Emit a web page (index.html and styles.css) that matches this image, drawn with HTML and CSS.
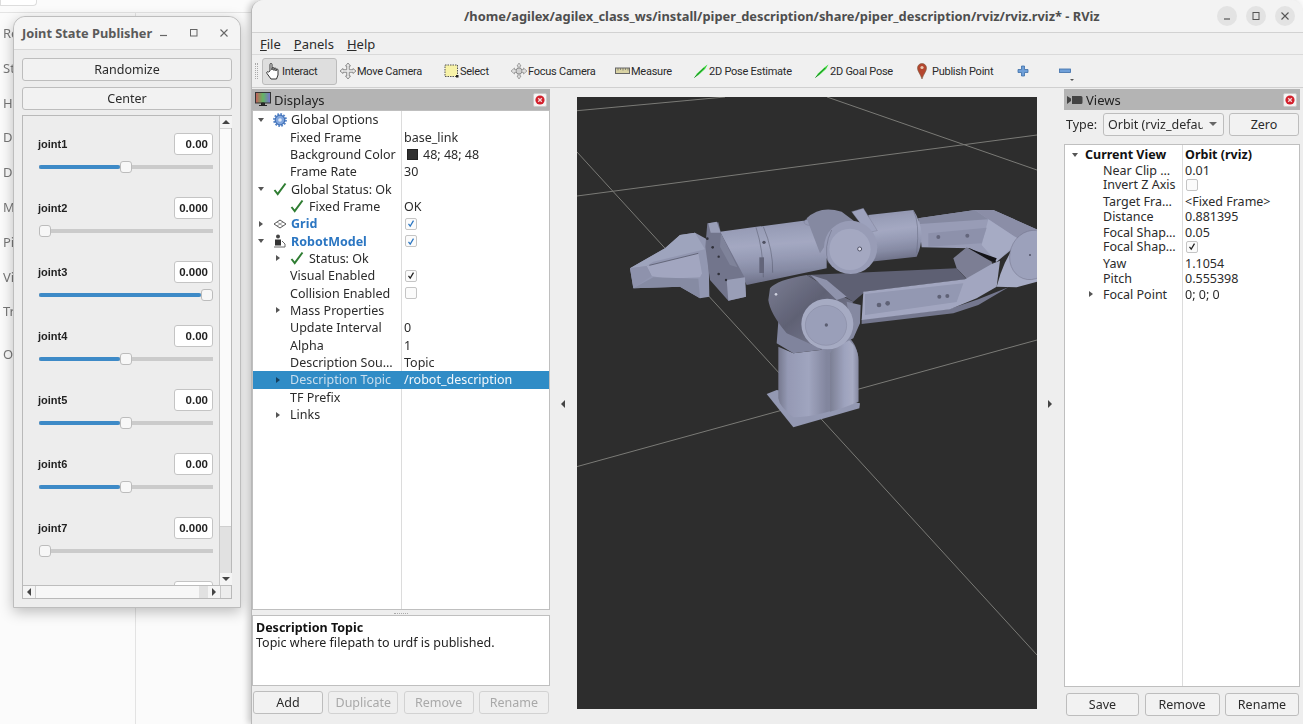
FILE: index.html
```html
<!DOCTYPE html>
<html lang="en">
<head>
<meta charset="utf-8">
<title>RViz</title>
<link rel="stylesheet" href="styles.css">
</head>
<body>
<svg class="defs" aria-hidden="true">
  <defs>
    <linearGradient id="cylH" x1="0" y1="0" x2="1" y2="0">
      <stop offset="0" stop-color="#7f8299"/><stop offset=".12" stop-color="#a0a5c2"/><stop offset=".38" stop-color="#acb1cd"/><stop offset=".6" stop-color="#8c90aa"/><stop offset="1" stop-color="#8e92ab"/>
    </linearGradient>
    <linearGradient id="cylH2" x1="0" y1="0" x2="1" y2="0">
      <stop offset="0" stop-color="#85899f"/><stop offset=".5" stop-color="#a9aecb"/><stop offset=".8" stop-color="#b4b9d3"/><stop offset="1" stop-color="#9094ae"/>
    </linearGradient>
    <linearGradient id="cylV" x1="0" y1="0" x2=".12" y2="1">
      <stop offset="0" stop-color="#969bb7"/><stop offset=".18" stop-color="#a4a9c5"/><stop offset=".42" stop-color="#b0b5d0"/><stop offset=".62" stop-color="#a2a7c3"/><stop offset=".82" stop-color="#9095b0"/><stop offset="1" stop-color="#787b94"/>
    </linearGradient>
    <linearGradient id="cylD" x1="0" y1="0" x2="1" y2="1">
      <stop offset="0" stop-color="#85889f"/><stop offset=".45" stop-color="#66687d"/><stop offset="1" stop-color="#8b8ea6"/>
    </linearGradient>
    <linearGradient id="screen" x1="0" y1="0" x2="1" y2="0">
      <stop offset="0" stop-color="#c85a5a"/><stop offset=".5" stop-color="#63b563"/><stop offset="1" stop-color="#7b6fd0"/>
    </linearGradient>
    <symbol id="i-close" viewBox="0 0 14 14">
      <rect x=".5" y=".5" width="13" height="13" rx="1.5" fill="#f5f5f5" stroke="#ccc"/>
      <circle cx="7" cy="7" r="4.6" fill="#d3202c"/>
      <path d="M5.2 5.2l3.6 3.6M8.8 5.2l-3.6 3.6" stroke="#f6dada" stroke-width="1.3"/>
    </symbol>
    <symbol id="i-check" viewBox="0 0 14 14">
      <path d="M1.5 8l3.2 4L12.5 1.5" fill="none" stroke="#2f7d32" stroke-width="2"/>
    </symbol>
    <symbol id="i-tick" viewBox="0 0 14 14">
      <path d="M3.5 7.5l2.4 3.2L10.5 3" fill="none" stroke="currentColor" stroke-width="1.7"/>
    </symbol>
    <symbol id="i-arrow" viewBox="0 0 14 14">
      <path d="M0 14L3 9.5 9.5 3.5 13.5.5 11 5 4.5 11Z" fill="#37d637"/>
      <path d="M.5 13.5L10 4" stroke="#1b7a2a" stroke-width=".8"/>
    </symbol>
  </defs>
</svg>

<div class="desk">
  <div class="desk-top"><span class="desk-tab"></span></div>
  <div class="desk-body">
    <div class="desk-side">
      <span>Re</span><span>St</span><span>He</span><span>De</span><span>De</span><span>M</span><span>Pi</span><span>Vi</span><span>Tr</span><span class="desk-last">O</span>
    </div>
  </div>

  <section class="jsp">
    <header class="jsp-title">
      <span class="jsp-name">Joint State Publisher</span>
      <span class="jsp-controls">
        <svg width="10" height="10" viewBox="0 0 10 10"><path d="M1 7.5h7" stroke="#666" stroke-width="1.2"/></svg>
        <svg width="10" height="10" viewBox="0 0 10 10"><rect x="1.5" y="1.5" width="6.5" height="6.5" fill="none" stroke="#666"/></svg>
        <svg width="10" height="10" viewBox="0 0 10 10"><path d="M1.5 1.5l7 7M8.5 1.5l-7 7" stroke="#666" stroke-width="1.1"/></svg>
      </span>
    </header>
    <div class="jsp-body">
      <button class="btn jsp-btn">Randomize</button>
      <button class="btn jsp-btn">Center</button>
      <div class="jsp-scroll">
        <div class="jsp-pane">
          <div class="jsp-list">
            <div class="joint"><div class="joint-head"><span>joint1</span><span class="joint-val">0.00</span></div><div class="slider"><span class="slider-fill" style="width:46.500%"></span><span class="slider-knob"></span></div></div>
            <div class="joint"><div class="joint-head"><span>joint2</span><span class="joint-val">0.000</span></div><div class="slider"><span class="slider-fill" style="width:0%"></span><span class="slider-knob"></span></div></div>
            <div class="joint"><div class="joint-head"><span>joint3</span><span class="joint-val">0.000</span></div><div class="slider"><span class="slider-fill" style="width:93%"></span><span class="slider-knob"></span></div></div>
            <div class="joint"><div class="joint-head"><span>joint4</span><span class="joint-val">0.00</span></div><div class="slider"><span class="slider-fill" style="width:46.500%"></span><span class="slider-knob"></span></div></div>
            <div class="joint"><div class="joint-head"><span>joint5</span><span class="joint-val">0.00</span></div><div class="slider"><span class="slider-fill" style="width:46.500%"></span><span class="slider-knob"></span></div></div>
            <div class="joint"><div class="joint-head"><span>joint6</span><span class="joint-val">0.00</span></div><div class="slider"><span class="slider-fill" style="width:46.500%"></span><span class="slider-knob"></span></div></div>
            <div class="joint"><div class="joint-head"><span>joint7</span><span class="joint-val">0.000</span></div><div class="slider"><span class="slider-fill" style="width:0%"></span><span class="slider-knob"></span></div></div>
            <div class="joint"><div class="joint-head"><span></span><span class="joint-val"></span></div></div>
          </div>
          <div class="vbar">
            <span class="sb-btn"><i class="tri tri-up"></i></span>
            <span class="vbar-thumb"></span>
            <span class="vbar-trough"></span>
            <span class="sb-btn"><i class="tri tri-down"></i></span>
          </div>
        </div>
        <div class="hbar">
          <span class="sb-btn"><i class="tri tri-left"></i></span>
          <span class="hbar-thumb"></span>
          <span class="hbar-trough"></span>
          <span class="sb-btn"><i class="tri tri-right"></i></span>
          <span class="hbar-corner"></span>
        </div>
      </div>
    </div>
  </section>

  <section class="rviz">
    <header class="rviz-title">
      <span class="rviz-name">/home/agilex/agilex_class_ws/install/piper_description/share/piper_description/rviz/rviz.rviz* - RViz</span>
      <span class="rviz-controls">
        <span class="wbtn"><svg width="10" height="10" viewBox="0 0 10 10"><path d="M2 8h6" stroke="#555" stroke-width="1.2"/></svg></span>
        <span class="wbtn"><svg width="10" height="10" viewBox="0 0 10 10"><rect x="2" y="1.5" width="6" height="7" fill="none" stroke="#555"/></svg></span>
        <span class="wbtn"><svg width="10" height="10" viewBox="0 0 10 10"><path d="M1.5 1.5l7 7M8.5 1.5l-7 7" stroke="#555" stroke-width="1.1"/></svg></span>
      </span>
    </header>
    <nav class="menu">
      <span><u>F</u>ile</span><span><u>P</u>anels</span><span><u>H</u>elp</span>
    </nav>
    <div class="toolbar">
      <span class="grip"></span>
      <span class="tool tool-on">
        <svg width="15" height="18" viewBox="0 0 15 18"><path d="M4 9V2.500a1 1 0 0 1 2 0V8V6.500a1 1 0 0 1 2 0V8.500V7a1 1 0 0 1 2 0v2V8a1 1 0 0 1 2 0v5l-1.500 4H5L1 11.500a1 1 0 0 1 1.500-1.500z" fill="#fff" stroke="#333"/></svg>
        Interact</span>
      <span class="tool">
        <svg width="16" height="16" viewBox="0 0 16 16"><path d="M8 0l2.500 3H9.300v3.700H13V5.500L16 8l-3 2.500V9.300H9.300V13h1.200L8 16l-2.500-3h1.200V9.300H3v1.200L0 8l3-2.500v1.200h3.700V3H5.500z" fill="#e8e8e8" stroke="#777" stroke-width=".8"/></svg>
        Move Camera</span>
      <span class="tool">
        <svg width="15" height="14" viewBox="0 0 15 14"><rect x="1" y="1" width="12.500" height="11.500" fill="#f7f2a8" stroke="#555" stroke-dasharray="1.500 1"/><rect x="12" y="11" width="2.500" height="2.500" fill="#222"/></svg>
        Select</span>
      <span class="tool">
        <svg width="16" height="16" viewBox="0 0 16 16"><path d="M8 0l2 3H9v3.500h3.500V5L16 8l-3.500 3V9.500H9V13h1l-2 3-2-3h1V9.500H3.500V11L0 8l3.500-3v1.500H7V3H6z" fill="#dedede" stroke="#8a8a8a" stroke-width=".7"/><circle cx="8" cy="8" r="3" fill="#cfcfcf" stroke="#777" stroke-width=".7"/></svg>
        Focus Camera</span>
      <span class="tool">
        <svg width="15" height="8" viewBox="0 0 15 8"><rect x=".5" y="1" width="14" height="5.500" fill="#d9d3a4" stroke="#666"/><path d="M3 1v2.500M5.500 1v2M8 1v2.500M10.500 1v2M13 1v2.500" stroke="#666" stroke-width=".7"/></svg>
        Measure</span>
      <span class="tool"><svg width="14" height="14"><use href="#i-arrow"/></svg>2D Pose Estimate</span>
      <span class="tool"><svg width="14" height="14"><use href="#i-arrow"/></svg>2D Goal Pose</span>
      <span class="tool tool-pin">
        <svg width="10" height="16" viewBox="0 0 10 16"><path d="M5 16C3.500 11 .5 8.500.5 5a4.500 4.500 0 0 1 9 0C9.500 8.500 6.500 11 5 16z" fill="#b5462f" stroke="#7a5a40" stroke-width=".6"/><circle cx="5" cy="4.500" r="1.600" fill="#e9c9b0"/></svg>
        Publish Point</span>
      <span class="tool">
        <svg width="12" height="12" viewBox="0 0 12 12"><path d="M4.500 1h3v3.500H11v3H7.500V11h-3V7.500H1v-3h3.500z" fill="#6f9fd8" stroke="#3d6ea8" stroke-width=".8"/></svg></span>
      <span class="tool tool-minus">
        <svg width="12" height="6" viewBox="0 0 12 6"><rect x=".5" y="1" width="11" height="3.500" fill="#6f9fd8" stroke="#3d6ea8" stroke-width=".8"/></svg>
        <i class="tri tri-down tri-more"></i></span>
    </div>

    <div class="main">
      <aside class="panel panel-displays">
        <div class="dock-head">
          <svg width="16" height="15" viewBox="0 0 16 15"><rect x=".5" y=".5" width="15" height="10.500" fill="url(#screen)" stroke="#333"/><path d="M6.500 11h3v2h-3zM4 13.500h8" stroke="#222" fill="#333"/></svg>
          <span>Displays</span>
          <svg class="dock-close" width="14" height="14"><use href="#i-close"/></svg>
        </div>
        <div class="tree tree-d">
          <div class="row"><div class="name l0"><i class="tw tw-d"></i><svg class="ico" width="14" height="14" viewBox="0 0 14 14"><circle cx="7" cy="7" r="4.800" fill="#7ea4dd" stroke="#3f6fb5" stroke-width="1.200"/><circle cx="7" cy="7" r="6" fill="none" stroke="#4f7fc4" stroke-width="1.800" stroke-dasharray="1.700 1.400"/><circle cx="7" cy="7" r="1.800" fill="#dfe9f7"/></svg>Global Options</div><div class="val"></div></div>
          <div class="row"><div class="name l1"><i class="tw"></i>Fixed Frame</div><div class="val">base_link</div></div>
          <div class="row"><div class="name l1"><i class="tw"></i>Background Color</div><div class="val"><i class="swatch"></i>48; 48; 48</div></div>
          <div class="row"><div class="name l1"><i class="tw"></i>Frame Rate</div><div class="val">30</div></div>
          <div class="row"><div class="name l0"><i class="tw tw-d"></i><svg class="ico" width="14" height="14"><use href="#i-check"/></svg>Global Status: Ok</div><div class="val"></div></div>
          <div class="row"><div class="name l1"><i class="tw"></i><svg class="ico2" width="14" height="14"><use href="#i-check"/></svg>Fixed Frame</div><div class="val">OK</div></div>
          <div class="row"><div class="name l0 link"><i class="tw tw-r"></i><svg class="ico" width="14" height="14" viewBox="0 0 14 14"><path d="M1 7l6-4 6 4-6 4z" fill="none" stroke="#555"/><path d="M4 5l6 4M10 5L4 9" stroke="#777" stroke-width=".7"/></svg>Grid</div><div class="val"><span class="cb cb-on"><svg width="13" height="13"><use href="#i-tick"/></svg></span></div></div>
          <div class="row"><div class="name l0 link"><i class="tw tw-d"></i><svg class="ico" width="14" height="14" viewBox="0 0 14 14"><circle cx="5" cy="2.500" r="2" fill="#444"/><path d="M2 5.500h6v6H2z" fill="#333"/><path d="M9 7l3 3v3H7M1 13h6" fill="none" stroke="#666"/></svg>RobotModel</div><div class="val"><span class="cb cb-on"><svg width="13" height="13"><use href="#i-tick"/></svg></span></div></div>
          <div class="row"><div class="name l1"><i class="tw tw-r"></i><svg class="ico2" width="14" height="14"><use href="#i-check"/></svg>Status: Ok</div><div class="val"></div></div>
          <div class="row"><div class="name l1"><i class="tw"></i>Visual Enabled</div><div class="val"><span class="cb"><svg width="13" height="13"><use href="#i-tick"/></svg></span></div></div>
          <div class="row"><div class="name l1"><i class="tw"></i>Collision Enabled</div><div class="val"><span class="cb"></span></div></div>
          <div class="row"><div class="name l1"><i class="tw tw-r"></i>Mass Properties</div><div class="val"></div></div>
          <div class="row"><div class="name l1"><i class="tw"></i>Update Interval</div><div class="val">0</div></div>
          <div class="row"><div class="name l1"><i class="tw"></i>Alpha</div><div class="val">1</div></div>
          <div class="row"><div class="name l1"><i class="tw"></i>Description Sou…</div><div class="val">Topic</div></div>
          <div class="row row-sel"><div class="name l1"><i class="tw tw-r"></i>Description Topic</div><div class="val">/robot_description</div></div>
          <div class="row"><div class="name l1"><i class="tw"></i>TF Prefix</div><div class="val"></div></div>
          <div class="row"><div class="name l1"><i class="tw tw-r"></i>Links</div><div class="val"></div></div>
        </div>
        <div class="split"><span class="split-grip"></span></div>
        <div class="help">
          <strong>Description Topic</strong>
          <span>Topic where filepath to urdf is published.</span>
        </div>
        <div class="btn-row btn-row-d">
          <button class="btn">Add</button>
          <button class="btn btn-off">Duplicate</button>
          <button class="btn btn-off">Remove</button>
          <button class="btn btn-off">Rename</button>
        </div>
      </aside>

      <div class="gutter"><i class="tri tri-left"></i></div>

      <div class="view">
        <svg class="scene" viewBox="577 97 460 612" aria-label="3D view of a robot arm">
          <g stroke="#7a7a76" stroke-width="1" fill="none">
            <path d="M577 110.700L725 97M827 97L1037 170M577 196L1037 135M577 152L1037 655M577 466.600L1037 340"/>
          </g>
          <g class="robot" transform="translate(620 190) scale(.33333)">
            <!-- back upper link -->
            <path d="M895,85 L1065,60 L1120,60 L1255,120 L1180,175 L1130,215 L1050,175 L905,172 Z" fill="#a3a8c4"/>
            <path d="M895,85 L1065,60 L1105,88 L900,102 Z" fill="#8f93ad"/>
            <path d="M1105,88 L1065,60 L1120,60 L1255,120 L1200,150 Z" fill="#9599b4"/>
            <path d="M1105,88 L1200,150 L1130,215 L1085,165 Z" fill="#b3b8d3"/>
            <path d="M925,130 L1100,113 L1085,160 L925,170 Z" fill="#989cb8"/>
            <path d="M1045,175 L1130,205 L1125,217 L1060,192 Z" fill="#15151a"/>
            <circle cx="955" cy="141" r="6" fill="#6b6e85"/><circle cx="1042" cy="137" r="6" fill="#6b6e85"/>
            <!-- forearm back cylinder -->
            <path d="M745,75 L880,60 Q900,90 905,130 Q905,170 890,200 L750,215 Z" fill="url(#cylV)"/>
            <path d="M880,62 Q900,95 890,190" stroke="#6a6d85" stroke-width="1.500" fill="none"/>
            <!-- inner face and lower arm -->
            <path d="M1000,205 L1040,172 L1115,215 L1118,228 L1040,266 L1010,235 Z" fill="#85889f"/>
            <path d="M560,255 L1010,235 L1040,268 L735,305 L700,335 L640,300 Z" fill="#65677c"/>
            <path d="M725,388 L990,356 L1075,328 L1165,292 L1075,345 L1000,370 L725,402 Z" fill="#7d8099"/>
            <path d="M730,305 L1035,268 L1115,222 L1140,212 L1130,290 L1070,325 L990,358 L725,390 Z" fill="#aeb3ce"/>
            <path d="M735,312 L1030,280 L1010,336 L735,375 Z" fill="#9ea3bf"/>
            <circle cx="777" cy="345" r="7" fill="#66697f"/><circle cx="803" cy="340" r="7" fill="#66697f"/><circle cx="958" cy="320" r="6" fill="#66697f"/><circle cx="982" cy="318" r="6" fill="#66697f"/>
            <!-- elbow -->
            <path d="M1130,290 Q1150,210 1190,160 L1225,125 L1270,115 L1270,270 L1190,292 Z" fill="#b4b9d4"/>
            <ellipse cx="1235" cy="195" rx="65" ry="75" transform="rotate(20 1235 195)" fill="#a8adc9" stroke="#7c7f98" stroke-width="1.500"/>
            <circle cx="1230" cy="195" r="3" fill="#55586c"/>
            <!-- main forearm -->
            <path d="M300,125 L550,92 L620,95 L620,235 L380,285 L355,235 Z" fill="url(#cylV)"/>
            <path d="M408,112 Q430,180 430,262M430,110 Q460,180 458,248" stroke="#55586c" stroke-width="1.400" fill="none"/>
            <rect x="418" y="202" width="14" height="47" fill="#6a6d83"/>
            <ellipse cx="570" cy="96" rx="18" ry="10" fill="#a0a5c1" stroke="#777a92"/>
            <circle cx="432" cy="157" r="5" fill="#555769"/>
            <!-- wrist -->
            <path d="M560,85 Q600,45 665,65 L705,95 L640,130 L600,190 Z" fill="#8f93ad"/>
            <path d="M695,65 L730,55 L772,122 L742,128 Z" fill="#a9aecb" stroke="#7a7d95"/>
            <circle cx="692" cy="172" r="80" fill="#a3a8c4"/>
            <circle cx="690" cy="178" r="62" fill="#b0b5d0"/>
            <path d="M635,120 Q610,170 625,220" stroke="#6d7088" stroke-width="1.500" fill="none"/>
            <circle cx="719" cy="177" r="6" fill="#eef" stroke="#55586c" stroke-width="3"/>
            <!-- gripper -->
            <path d="M30,235 L135,175 L180,135 L225,128 L265,150 L268,320 L240,325 L180,290 L40,295 Z" fill="#9da2be"/>
            <path d="M180,135 L225,128 L255,178 L100,215 L80,228 L30,235 L135,175 Z" fill="#aab0cb"/>
            <path d="M80,228 L235,190 L246,250 L240,262 L140,266 L95,258 Z" fill="#aeb3ce"/>
            <path d="M88,226 L235,190" stroke="#5f6176" stroke-width="2.500"/>
            <path d="M40,295 L100,262 L235,266 L240,325 L180,290 Z" fill="#9095af"/>
            <path d="M30,235 L80,228 L95,258 L40,295 Z" fill="#999db9"/>
            <path d="M262,100 L295,97 L303,130 L375,265 L378,320 L325,332 L270,270 L256,170 Z" fill="#7b7e97"/>
            <path d="M265,100 L290,95 L302,128 L272,128 Z" fill="#a5aac5"/>
            <path d="M303,130 L352,232 L330,225 L300,170 Z" fill="#898da6"/>
            <path d="M320,270 L375,262 L378,320 L325,332 Z" fill="#a5aac5"/>
            <g fill="#34353f"><circle cx="262" cy="146" r="4"/><circle cx="278" cy="172" r="4"/><circle cx="296" cy="200" r="3.500"/><circle cx="296" cy="252" r="4"/><circle cx="318" cy="270" r="3.500"/></g>
            <!-- base -->
            <path d="M440,612 L470,600 L720,640 L718,655 L520,712 Z" fill="#9ea3bf"/>
            <path d="M475,470 L475,625 Q478,650 520,682 Q600,680 715,635 L715,500 Q705,450 680,440 L600,480 L520,490 Z" fill="url(#cylH)"/>
            <path d="M630,490 Q640,470 680,445 Q715,470 715,510 L715,635 Q670,655 630,665 Z" fill="url(#cylH2)"/>
            <!-- shoulder -->
            <path d="M475,395 L470,460 L520,490 L600,480 L660,450 L580,450 L500,400 Z" fill="#8a8ea9"/>
            <path d="M450,295 Q470,270 560,255 L650,310 L700,335 L600,475 L500,430 Q450,370 445,330 Z" fill="url(#cylD)"/>
            <path d="M572,255 L620,270 L680,320 L650,330 Z" fill="#9a9eb9"/>
            <path d="M680,335 L722,345 L720,400 L700,445 L650,470 L690,400 Z" fill="#8f93ad"/>
            <ellipse cx="622" cy="402" rx="78" ry="76" fill="#b3b8d2"/>
            <ellipse cx="618" cy="406" rx="62" ry="60" fill="#a6abc7" stroke="#8b8fa9" stroke-width="1.500"/>
            <circle cx="619" cy="405" r="5" fill="#62657a"/>
            <circle cx="468" cy="313" r="4" fill="#dfe2f0"/>
          </g>
        </svg>
      </div>

      <div class="gutter"><i class="tri tri-right"></i></div>

      <aside class="panel panel-views">
        <div class="dock-head">
          <svg width="16" height="12" viewBox="0 0 16 12"><path d="M0 2l4 2.500V7L0 10zM5 2h9a1.500 1.500 0 0 1 1.500 1.500v5A1.500 1.500 0 0 1 14 10H5z" fill="#444"/></svg>
          <span>Views</span>
          <svg class="dock-close" width="14" height="14"><use href="#i-close"/></svg>
        </div>
        <div class="type-row">
          <span>Type:</span>
          <span class="combo"><span class="combo-text">Orbit (rviz_defau</span><i class="tri tri-down"></i></span>
          <button class="btn zero">Zero</button>
        </div>
        <div class="tree tree-v">
          <div class="vrow vrow-b"><div class="name vl0"><i class="tw tw-d"></i>Current View</div><div class="val">Orbit (rviz)</div></div>
          <div class="vrow"><div class="name vl1"><i class="tw"></i>Near Clip …</div><div class="val">0.01</div></div>
          <div class="vrow"><div class="name vl1"><i class="tw"></i>Invert Z Axis</div><div class="val"><span class="cb"></span></div></div>
          <div class="vrow"><div class="name vl1"><i class="tw"></i>Target Fra…</div><div class="val">&lt;Fixed Frame&gt;</div></div>
          <div class="vrow"><div class="name vl1"><i class="tw"></i>Distance</div><div class="val">0.881395</div></div>
          <div class="vrow"><div class="name vl1"><i class="tw"></i>Focal Shap…</div><div class="val">0.05</div></div>
          <div class="vrow"><div class="name vl1"><i class="tw"></i>Focal Shap…</div><div class="val"><span class="cb"><svg width="13" height="13"><use href="#i-tick"/></svg></span></div></div>
          <div class="vrow"><div class="name vl1"><i class="tw"></i>Yaw</div><div class="val">1.1054</div></div>
          <div class="vrow"><div class="name vl1"><i class="tw"></i>Pitch</div><div class="val">0.555398</div></div>
          <div class="vrow"><div class="name vl1"><i class="tw tw-r"></i>Focal Point</div><div class="val">0; 0; 0</div></div>
        </div>
        <div class="btn-row btn-row-v">
          <button class="btn">Save</button>
          <button class="btn">Remove</button>
          <button class="btn">Rename</button>
        </div>
      </aside>
    </div>
  </section>
</div>
</body>
</html>
```

FILE: styles.css
```css
* { box-sizing: border-box; }
html, body { margin: 0; height: 100%; overflow: hidden; }
body { font-family: "Noto Sans", sans-serif; font-size: 12.5px; color: #2b2b2b; background: #fbfbfb; }
i { display: block; }
.defs { position: absolute; width: 0; height: 0; }

/* desktop behind the windows */
.desk { position: relative; width: 1303px; height: 724px; overflow: hidden; filter: blur(.3px); }
.desk-top { height: 13px; border-bottom: 1px solid #e4e4e4; }
.desk-tab { display: block; width: 37px; height: 6px; background: #fff; border: 1px solid #ddd; border-top: 0; border-radius: 0 0 4px 0; }
.desk-body { height: 711px; }
.desk-side { width: 136px; height: 100%; border-right: 1px solid #e3e3e3; padding-top: 11px; display: flex; flex-direction: column; color: #777; font-size: 13px; }
.desk-side span { height: 34.8px; line-height: 18px; padding-left: 3px; }
.desk-side .desk-last { margin-top: 8px; }

/* Joint State Publisher window */
.jsp { position: absolute; left: 13px; top: 16px; width: 228px; height: 592px; background: #ededed; border: 1px solid #bdbdbd; border-radius: 12px 12px 0 0; box-shadow: 0 4px 14px rgba(0,0,0,.25); display: flex; flex-direction: column; }
.jsp-title { height: 33px; flex: none; display: flex; align-items: center; padding-left: 8px; background: #f4f4f4; border-bottom: 1px solid #d8d8d8; border-radius: 12px 12px 0 0; }
.jsp-name { font-weight: 700; font-size: 12.800px; color: #5a5a5a; width: 137px; white-space: nowrap; }
.jsp-controls { display: flex; gap: 20px; }
.jsp-body { flex: 1; min-height: 0; padding: 8px 8px 8px 8px; display: flex; flex-direction: column; gap: 6px; }
.jsp-btn { height: 23px; width: 100%; flex: none; }
.jsp-scroll { flex: 1; min-height: 0; margin-top: -1px; border: 1px solid #b9b9b9; display: flex; flex-direction: column; }
.jsp-pane { flex: 1; min-height: 0; display: flex; }
.jsp-list { flex: 1; min-width: 0; overflow: hidden; padding: 17px 6px 0 15px; }
.joint { height: 64px; }
.joint-head { display: flex; justify-content: space-between; align-items: center; height: 22px; font: 700 11px "Liberation Sans", sans-serif; color: #222; }
.joint-val { width: 39px; height: 22px; background: #fff; border: 1px solid #c4c4c4; border-radius: 3px; text-align: right; padding-right: 4px; line-height: 20px; font-size: 11.5px; }
.slider { position: relative; display: flex; align-items: center; height: 14px; margin-top: 5px; background: linear-gradient(#cbcbcb, #cbcbcb) center / 100% 4px no-repeat; border-radius: 2px; margin-left: 1px; }
.slider-fill { height: 4px; background: #3d8ac7; border-radius: 2px; }
.slider-knob { width: 12px; height: 12px; flex: none; background: #f7f7f7; border: 1px solid #bcbcbc; border-radius: 3px; }

.vbar { width: 12px; flex: none; display: flex; flex-direction: column; border-left: 1px solid #c8c8c8; background: #f6f6f6; }
.sb-btn { display: flex; align-items: center; justify-content: center; flex: none; width: 12px; height: 12px; background: #f4f4f4; }
.vbar-thumb { height: 399px; flex: none; background: #fafafa; border-top: 1px solid #d5d5d5; border-bottom: 1px solid #cfcfcf; }
.vbar-trough { flex: 1; background: #e1e1e1; }
.hbar { height: 13px; flex: none; display: flex; border-top: 1px solid #bdbdbd; background: #f4f4f4; }
.hbar-thumb { width: 164px; flex: none; background: #f7f7f7; border-left: 1px solid #d0d0d0; }
.hbar-trough { width: 9px; flex: none; background: #e1e1e1; }
.hbar-corner { flex: 1; background: #ededed; border-left: 1px solid #c8c8c8; }

.tri { width: 0; height: 0; flex: none; }
.tri-up { border: 4px solid transparent; border-top: 0; border-bottom: 4px solid #444; }
.tri-down { border: 4px solid transparent; border-bottom: 0; border-top: 4px solid #444; }
.tri-left { border: 4px solid transparent; border-left: 0; border-right: 4px solid #444; }
.tri-right { border: 4px solid transparent; border-right: 0; border-left: 4px solid #444; }

.btn { font: 12.5px "Noto Sans", sans-serif; color: #2b2b2b; background: #f2f2f2; border: 1px solid #bdbdbd; border-radius: 3px; padding: 0; }
.btn-off { color: #a9a9a9; border-color: #d2d2d2; background: #efefef; }

/* RViz window */
.rviz { position: absolute; left: 251px; top: 0; width: 1052px; height: 724px; background: #eeeeee; border-left: 1px solid #b8b8b8; border-radius: 12px 12px 0 0; box-shadow: -3px 0 6px rgba(0,0,0,.2); display: flex; flex-direction: column; }
.rviz-title { height: 33px; flex: none; display: flex; align-items: center; padding-left: 212px; background: #f3f3f3; border-bottom: 1px solid #d2d2d2; border-radius: 12px 12px 0 0; }
.rviz-name { font-weight: 700; font-size: 12.850px; color: #4e4e4e; white-space: nowrap; }
.rviz-controls { margin-left: auto; margin-right: 8px; display: flex; gap: 9px; }
.wbtn { width: 20px; height: 20px; border-radius: 50%; background: #e3e3e3; display: flex; align-items: center; justify-content: center; }
.menu { height: 21px; flex: none; display: flex; gap: 13px; align-items: center; padding-left: 8px; font-size: 13px; background: #f0f0f0; }
.toolbar { height: 34px; flex: none; display: grid; grid-template-columns: 10px 78px 104px 67px 104px 79px 121px 102px 100px 43px 1fr; align-items: center; border-top: 1px solid #dadada; border-bottom: 1px solid #d0d0d0; background: #f0f0f0; font: 11px Roboto, sans-serif; letter-spacing: -.25px; color: #2a2a2a; }
.grip { width: 3px; height: 16px; margin-left: 3px; border-left: 1px dotted #aaa; border-right: 1px dotted #aaa; }
.tool { display: flex; align-items: center; gap: 1px; height: 27px; white-space: nowrap; }
.tool-on { width: 75px; padding-left: 3px; background: #dedede; border: 1px solid #bcbcbc; border-radius: 3px; }
.tool-pin { gap: 5px; }
.tool-minus { margin-left: -1px; }
.tri-more { border-width: 2px; border-top-color: #555; margin: 18px 0 0 -2px; }

.main { flex: 1; min-height: 0; display: flex; padding-top: 1px; }
.panel { display: flex; flex-direction: column; flex: none; }
.panel-displays { width: 298px; }
.panel-views { width: 236px; }
.dock-head { height: 21px; flex: none; display: flex; align-items: center; gap: 3px; padding: 0 3px; background: #b4b4b4; font-size: 13px; color: #222; }
.dock-close { margin-left: auto; }
.tree { background: #fff; border: 1px solid #bfbfbf; }
.tree-d { height: 500px; background: linear-gradient(#dcdcdc, #dcdcdc) 148px 0 / 1px 100% no-repeat #fff; }
.row { display: grid; grid-template-columns: 149px 1fr; height: 17.350px; align-items: center; white-space: nowrap; }
.row-sel { background: #308cc6; color: #c9deee; }
.row-sel .val { color: #f2f7fb; }
.name { display: flex; align-items: center; overflow: hidden; }
.val { display: flex; align-items: center; padding-left: 2px; }
.l0 { padding-left: 3px; }
.l1 { padding-left: 20px; }
.tw { width: 17px; flex: none; }
.tw-d::before { content: ""; display: block; width: 0; height: 0; margin-left: 2px; border: 3.5px solid transparent; border-bottom: 0; border-top: 4px solid #555; }
.tw-r::before { content: ""; display: block; width: 0; height: 0; margin-left: 3px; border: 3.5px solid transparent; border-right: 0; border-left: 4px solid #555; }
.row-sel .tw-r::before { border-left-color: #16405f; }
.ico { width: 14px; height: 14px; flex: none; margin-right: 4px; }
.ico2 { flex: none; margin-right: 5px; }
.link { color: #2b76c2; font-weight: 700; }
.swatch { width: 11px; height: 11px; margin: 0 5px 0 3px; background: #303030; border: 1px solid #222; }
.cb { display: flex; width: 12px; height: 12px; background: #fbfbfb; border: 1px solid #c5c5c5; border-radius: 2px; color: #222; overflow: hidden; align-items: center; justify-content: center; margin-left: 1px; }
.cb-on { color: #2b76c2; }
.split { height: 5px; flex: none; display: flex; justify-content: center; align-items: flex-end; }
.split-grip { width: 14px; height: 2px; border-top: 1px dotted #aaa; }
.help { height: 71px; flex: none; background: #fff; border: 1px solid #bfbfbf; padding: 4px 3px; display: flex; flex-direction: column; line-height: 15px; color: #222; }
.help strong { color: #111; }
.btn-row { display: grid; flex: none; }
.btn-row .btn { height: 23px; }
.btn-row-d { grid-template-columns: repeat(4, 70px); gap: 5.300px; padding: 5px 0 0 1px; }
.btn-row-v { grid-template-columns: 73px 75px 74px; gap: 5.500px; padding: 6px 0 0 2px; }

.gutter { width: 27px; flex: none; display: flex; align-items: center; justify-content: center; padding: 0 1px 6px 0; }
.view { width: 460px; flex: none; margin: 8px 0 15px; background: #2d2d2d; overflow: hidden; }
.scene { display: block; width: 100%; height: 100%; }
.robot { filter: brightness(.93); }

.type-row { height: 34px; flex: none; display: flex; align-items: center; gap: 5px; padding: 0 0 6px 2px; }
.type-row > span:first-child { width: 32px; }
.combo { width: 121px; height: 23px; display: flex; align-items: center; background: #f2f2f2; border: 1px solid #bdbdbd; border-radius: 3px; padding: 0 6px 0 4px; }
.combo-text { flex: 1; min-width: 0; white-space: nowrap; overflow: hidden; }
.combo .tri { margin-left: 6px; border-top-color: #666; }
.zero { width: 70px; height: 23px; }
.tree-v { height: 543px; padding-top: 1px; background: linear-gradient(#dcdcdc, #dcdcdc) 117px 0 / 1px 100% no-repeat #fff; }
.vrow { display: grid; grid-template-columns: 118px 1fr; height: 15.500px; align-items: center; white-space: nowrap; }
.vrow-b { font-weight: 700; color: #111; }
.vl0 { padding-left: 5px; }
.vl0 .tw { width: 15px; }
.vl1 { padding-left: 21px; }
.vl1 .tw { width: 17px; }
```
